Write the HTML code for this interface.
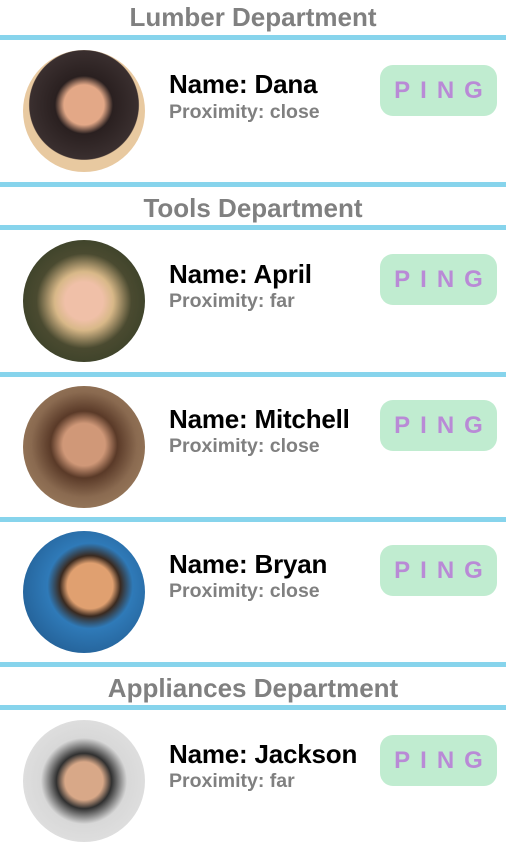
<!DOCTYPE html>
<html><head><meta charset="utf-8"><style>
*{margin:0;padding:0;box-sizing:border-box}
body{width:506px;height:826px;overflow:hidden;background:#fff;font-family:"Liberation Sans",Arial,sans-serif;position:relative}
.line{position:absolute;left:0;width:506px;height:5px;background:#87d4ec}
.hdr{position:absolute;left:0;width:506px;text-align:center;color:#808080;font-weight:bold;font-size:26px}
.av{position:absolute;left:23px;width:122px;height:122px;border-radius:50%;overflow:hidden}
.name{position:absolute;left:169px;font-weight:bold;font-size:26px;color:#000;letter-spacing:-0.2px}
.prox{position:absolute;left:169px;font-weight:bold;font-size:19.5px;color:#808080}
.ping{position:absolute;left:380px;width:117px;height:51px;border-radius:13px;background:#c0ecd0;color:#b98ad6;font-weight:bold;font-size:24px;letter-spacing:10px;text-align:center;line-height:51px;padding-left:10px}
</style></head><body>
<div class="hdr" style="top:2px">Lumber Department</div>
<div class="line" style="top:35px"></div>
<div class="av" style="top:50px;background:radial-gradient(circle at 50% 45%,#e3a887 0 22%,#2a2020 32%,#3a2f2f 60%,#e8c9a0 61%)"></div>
<div class="name" style="top:69px">Name: Dana</div>
<div class="prox" style="top:101px">Proximity: close</div>
<div class="ping" style="top:65px">PING</div>
<div class="line" style="top:182px"></div>
<div class="hdr" style="top:193px">Tools Department</div>
<div class="line" style="top:225px"></div>
<div class="av" style="top:240px;background:radial-gradient(circle at 50% 50%,#f0c0a8 0 22%,#d8b888 34%,#4a4a30 55%,#2e3a22)"></div>
<div class="name" style="top:259px">Name: April</div>
<div class="prox" style="top:290px">Proximity: far</div>
<div class="ping" style="top:254px">PING</div>
<div class="line" style="top:372px"></div>
<div class="av" style="top:386px;background:radial-gradient(circle at 50% 48%,#d09878 0 24%,#5a3a28 38%,#8a6a50 60%,#a88a68)"></div>
<div class="name" style="top:404px">Name: Mitchell</div>
<div class="prox" style="top:435px">Proximity: close</div>
<div class="ping" style="top:400px">PING</div>
<div class="line" style="top:517px"></div>
<div class="av" style="top:531px;background:radial-gradient(circle at 55% 45%,#e0a070 0 24%,#3a2a20 32%,#2f7ab8 45%,#1c4f80)"></div>
<div class="name" style="top:549px">Name: Bryan</div>
<div class="prox" style="top:580px">Proximity: close</div>
<div class="ping" style="top:545px">PING</div>
<div class="line" style="top:662px"></div>
<div class="hdr" style="top:673px">Appliances Department</div>
<div class="line" style="top:705px"></div>
<div class="av" style="top:720px;background:radial-gradient(circle at 50% 50%,#d8a888 0 22%,#303030 32%,#d8d8d8 50%,#e6e6e6)"></div>
<div class="name" style="top:739px">Name: Jackson</div>
<div class="prox" style="top:770px">Proximity: far</div>
<div class="ping" style="top:735px">PING</div>
</body></html>
